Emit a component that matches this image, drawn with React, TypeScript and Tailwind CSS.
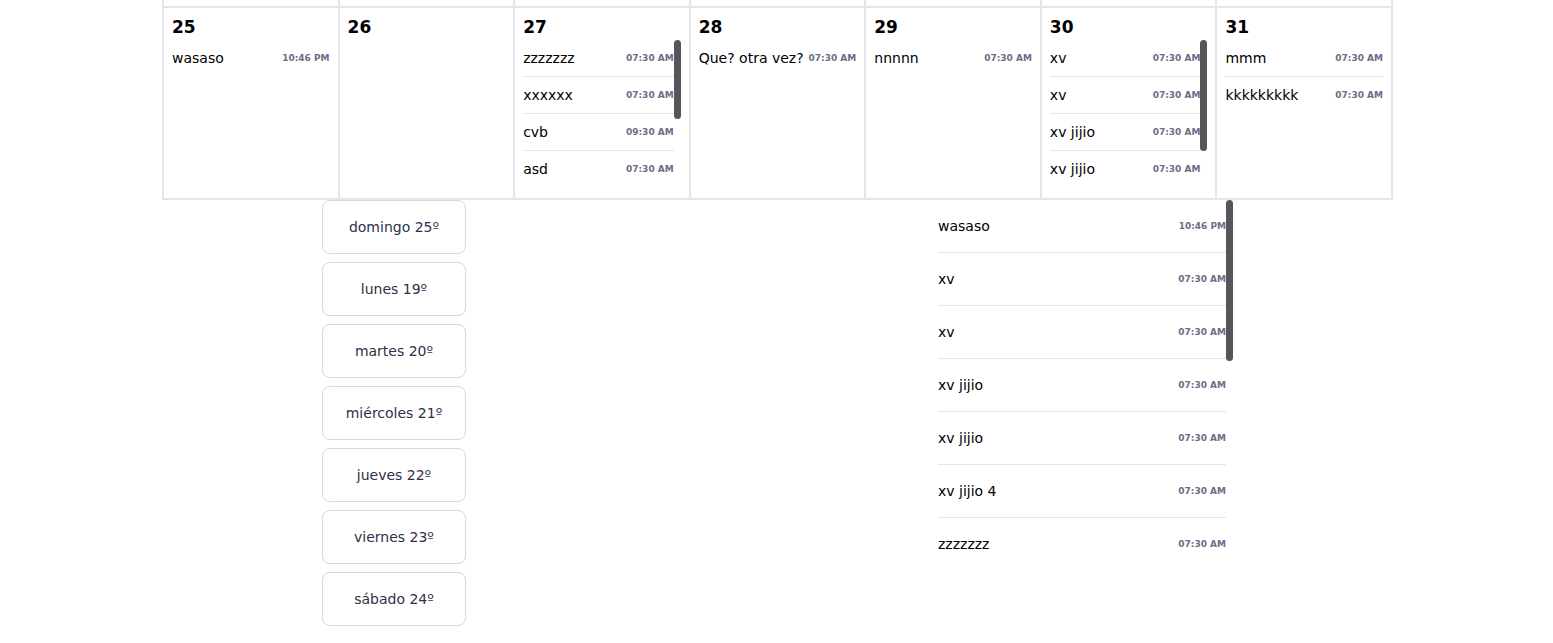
import React from 'react';

type Evento = { titulo: string; hora: string };
type Dia = { numero: number; eventos: Evento[] };

const semana: Dia[] = [
    { numero: 25, eventos: [{ titulo: 'wasaso', hora: '10:46 PM' }] },
    { numero: 26, eventos: [] },
    {
        numero: 27,
        eventos: [
            { titulo: 'zzzzzzz', hora: '07:30 AM' },
            { titulo: 'xxxxxx', hora: '07:30 AM' },
            { titulo: 'cvb', hora: '09:30 AM' },
            { titulo: 'asd', hora: '07:30 AM' },
            { titulo: 'qwerty', hora: '07:30 AM' },
            { titulo: 'hola', hora: '08:00 AM' },
            { titulo: 'prueba', hora: '07:30 AM' },
        ],
    },
    { numero: 28, eventos: [{ titulo: 'Que? otra vez?', hora: '07:30 AM' }] },
    { numero: 29, eventos: [{ titulo: 'nnnnn', hora: '07:30 AM' }] },
    {
        numero: 30,
        eventos: [
            { titulo: 'xv', hora: '07:30 AM' },
            { titulo: 'xv', hora: '07:30 AM' },
            { titulo: 'xv jijio', hora: '07:30 AM' },
            { titulo: 'xv jijio', hora: '07:30 AM' },
            { titulo: 'xv jijio 4', hora: '07:30 AM' },
        ],
    },
    {
        numero: 31,
        eventos: [
            { titulo: 'mmm', hora: '07:30 AM' },
            { titulo: 'kkkkkkkkk', hora: '07:30 AM' },
        ],
    },
];

const dias = ['domingo 25º', 'lunes 19º', 'martes 20º', 'miércoles 21º', 'jueves 22º', 'viernes 23º', 'sábado 24º'];

const listaDelDia: Evento[] = [
    { titulo: 'wasaso', hora: '10:46 PM' },
    { titulo: 'xv', hora: '07:30 AM' },
    { titulo: 'xv', hora: '07:30 AM' },
    { titulo: 'xv jijio', hora: '07:30 AM' },
    { titulo: 'xv jijio', hora: '07:30 AM' },
    { titulo: 'xv jijio 4', hora: '07:30 AM' },
    { titulo: 'zzzzzzz', hora: '07:30 AM' },
    { titulo: 'xxxxxx', hora: '07:30 AM' },
    { titulo: 'cvb', hora: '09:30 AM' },
    { titulo: 'asd', hora: '07:30 AM' },
    { titulo: 'qwerty', hora: '07:30 AM' },
    { titulo: 'hola', hora: '08:00 AM' },
    { titulo: 'prueba', hora: '07:30 AM' },
    { titulo: 'Que? otra vez?', hora: '07:30 AM' },
    { titulo: 'nnnnn', hora: '07:30 AM' },
    { titulo: 'mmm', hora: '07:30 AM' },
];

// alto visible de las listas y alto de cada fila
const ALTO_CELDA = 143;
const FILA_CELDA = 37;
const ALTO_LISTA = 370;
const FILA_LISTA = 53;

const Hora: React.FC<{ hora: string }> = ({ hora }) => (
    <span className="shrink-0 text-[9px] font-bold text-[#6b6e86] whitespace-nowrap">{hora}</span>
);

// barra de desplazamiento dibujada (el navegador no la muestra)
const Barra: React.FC<{ alto: number }> = ({ alto }) => (
    <div className="absolute top-0 right-0 w-[7px] rounded-full bg-[#55555a]" style={{ height: alto }}></div>
);

const Celda: React.FC<{ dia: Dia }> = ({ dia }) => {
    const contenido = dia.eventos.length * FILA_CELDA - 1;
    const desborda = contenido > ALTO_CELDA;

    return (
        <div className="bg-white h-[190px] p-2 flex flex-col">
            <div className="text-[17px] leading-[22px] font-bold text-black mb-[2px]">{dia.numero}</div>
            <div className="relative">
                <div className={`max-h-[143px] overflow-hidden ${desborda ? 'pr-[7px]' : ''}`}>
                    {dia.eventos.map((ev, i) => (
                        <div
                            key={i}
                            className="flex items-center justify-between gap-1 py-2 text-sm leading-5 text-black border-b border-[#e5e5ea] last:border-b-0"
                        >
                            <span className="whitespace-nowrap">{ev.titulo}</span>
                            <Hora hora={ev.hora} />
                        </div>
                    ))}
                </div>
                {desborda && <Barra alto={Math.round((ALTO_CELDA * ALTO_CELDA) / contenido)} />}
            </div>
        </div>
    );
};

export default function App() {
    const contenidoLista = listaDelDia.length * FILA_LISTA;

    return (
        <div className="min-h-screen bg-white font-['DejaVu_Sans',sans-serif]">
            {/* Calendario */}
            <div className="ml-[162px] w-[1231px] bg-[#e4e4ea] grid grid-cols-7 gap-[2px] px-[2px] pb-[2px]">
                {semana.map((d) => (
                    <div key={`prev-${d.numero}`} className="bg-white h-[6px]"></div>
                ))}
                {semana.map((d) => (
                    <Celda key={d.numero} dia={d} />
                ))}
            </div>

            <div className="flex items-start">
                {/* Selector de días */}
                <div className="ml-[322px] w-[144px] flex flex-col gap-2">
                    {dias.map((d) => (
                        <button
                            key={d}
                            className="h-[54px] w-full bg-white rounded-lg border border-[#d8d8e0] text-sm text-[#30304a]"
                        >
                            {d}
                        </button>
                    ))}
                </div>

                {/* Lista del día */}
                <div className="relative ml-[472px] w-[295px]">
                    <div className="h-[370px] overflow-hidden pr-[7px]">
                        {listaDelDia.map((ev, i) => (
                            <div
                                key={i}
                                className="flex items-center justify-between py-4 text-sm leading-5 text-black border-b border-[#e5e5ea]"
                            >
                                <span>{ev.titulo}</span>
                                <Hora hora={ev.hora} />
                            </div>
                        ))}
                    </div>
                    <Barra alto={Math.round((ALTO_LISTA * ALTO_LISTA) / contenidoLista)} />
                </div>
            </div>
        </div>
    );
}
